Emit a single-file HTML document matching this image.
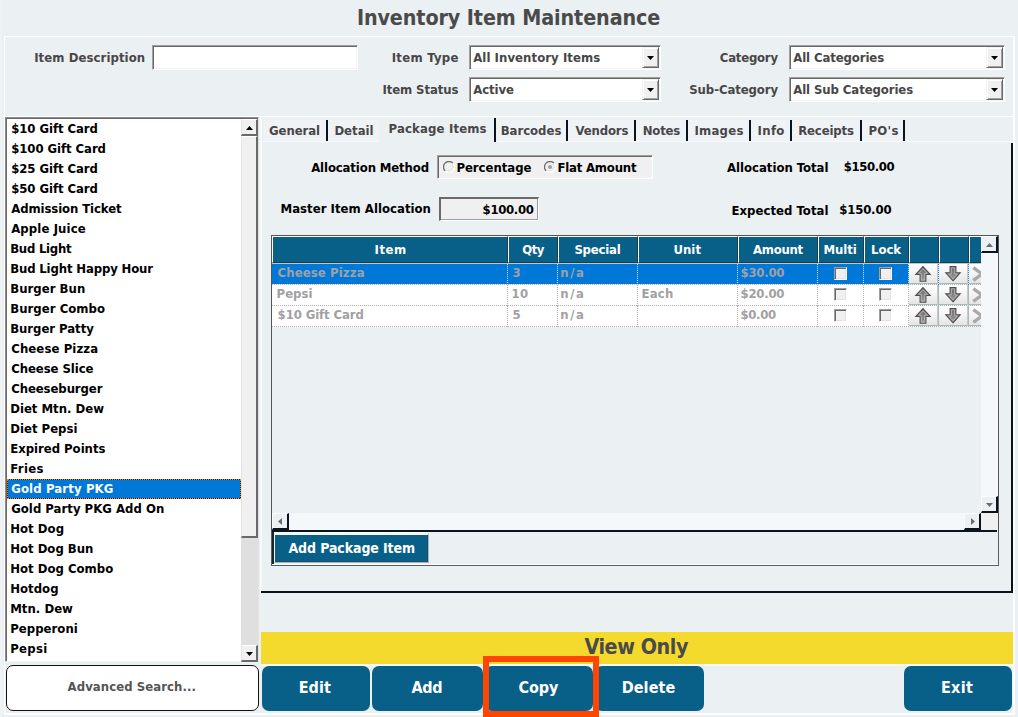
<!DOCTYPE html>
<html><head><meta charset="utf-8"><title>Inventory Item Maintenance</title>
<style>
html,body{margin:0;padding:0}
body{width:1018px;height:717px;overflow:hidden;position:relative;background:#ebf0f3;font-family:"DejaVu Sans Condensed","DejaVu Sans","Liberation Sans",sans-serif;font-weight:bold;font-size:13px;font-stretch:condensed;color:#000}
.a{position:absolute;box-sizing:border-box}
.t{position:absolute;white-space:nowrap}
.sunk{position:absolute;box-sizing:border-box;background:#fff;border:1px solid;border-color:#a0a0a0 #fff #fff #a0a0a0;box-shadow:inset 1px 1px 0 #696969,inset -1px -1px 0 #f4f4f4}
.cbtn{position:absolute;box-sizing:border-box;width:17px;height:21px;background:#f0f0f0;border:1px solid;border-color:#f4f4f4 #696969 #696969 #f4f4f4;box-shadow:inset 1px 1px 0 #fff,inset -1px -1px 0 #a0a0a0}
.sbtn{position:absolute;box-sizing:border-box;width:17px;height:17px;background:#f0f0f0;border-style:solid;border-width:1px 2px 2px 1px;border-color:#fff #696969 #696969 #e3e3e3}
.hc{position:absolute;box-sizing:border-box;top:236px;height:27px;background:#085f87;border-style:solid;border-width:1px;border-color:#fff #1d3d4d #1d3d4d #fff}
.cb{position:absolute;box-sizing:border-box;width:13px;height:13px;background:#f0f0f0;border:1px solid;border-color:#a0a0a0 #fff #fff #a0a0a0;box-shadow:inset 1px 1px 0 #696969,inset -1px -1px 0 #e3e3e3}
.ab{position:absolute;box-sizing:border-box;width:29px;height:20px;background:linear-gradient(#fff,#f4f4f4 50%,#e4e4e4);border-right:1px solid #c8c8c8;border-bottom:1px solid #a9b9b9;overflow:hidden}
.ab svg{position:absolute;left:0;top:0}
.gsb{position:absolute;box-sizing:border-box;width:17px;height:17px;background:#ecf0f3;border-style:solid;border-width:1px 2px 2px 1px;border-color:#fbfcfd #0a1420 #0a1420 #fbfcfd}
</style></head><body>
<div class="t" style="left:356.90px;top:4.00px;font-size:21.33px;line-height:27px;letter-spacing:-0.108px;color:#4a4a4a;">Inventory Item Maintenance</div>
<div class="a" style="left:0;top:0;width:2px;height:717px;background:#eff3f6"></div>
<div class="a" style="left:4px;top:36px;width:1011px;height:679px;border-style:solid;border-color:#fff;border-width:1px 2px 2px 1px"></div>
<div class="a" style="left:5px;top:116px;width:1008px;height:1px;background:#fff"></div>
<div class="t" style="left:34.20px;top:49.00px;font-size:13px;line-height:17px;letter-spacing:0.076px;color:#484648;">Item Description</div>
<div class="sunk" style="left:152px;top:45px;width:206px;height:25px"></div>
<div class="t" style="left:391.70px;top:49.00px;font-size:13px;line-height:17px;letter-spacing:0.280px;color:#484648;">Item Type</div>
<div class="t" style="left:382.40px;top:81.00px;font-size:13px;line-height:17px;letter-spacing:-0.086px;color:#484648;">Item Status</div>
<div class="sunk" style="left:469px;top:45px;width:192px;height:25px"></div>
<div class="t" style="left:473.20px;top:49.00px;font-size:13px;line-height:17px;letter-spacing:0.070px;color:#484648;">All Inventory Items</div>
<div class="cbtn" style="left:642px;top:47px"><svg class="a" style="left:4px;top:8px" width="7" height="4" viewBox="0 0 7 4"><path d="M0 0H7L3.5 4Z" fill="#000"/></svg></div>
<div class="sunk" style="left:469px;top:77px;width:192px;height:25px"></div>
<div class="t" style="left:473.20px;top:81.00px;font-size:13px;line-height:17px;letter-spacing:-0.081px;color:#484648;">Active</div>
<div class="cbtn" style="left:642px;top:79px"><svg class="a" style="left:4px;top:8px" width="7" height="4" viewBox="0 0 7 4"><path d="M0 0H7L3.5 4Z" fill="#000"/></svg></div>
<div class="sunk" style="left:789px;top:45px;width:216px;height:25px"></div>
<div class="t" style="left:793.20px;top:49.00px;font-size:13px;line-height:17px;letter-spacing:-0.096px;color:#484648;">All Categories</div>
<div class="cbtn" style="left:986px;top:47px"><svg class="a" style="left:4px;top:8px" width="7" height="4" viewBox="0 0 7 4"><path d="M0 0H7L3.5 4Z" fill="#000"/></svg></div>
<div class="sunk" style="left:789px;top:77px;width:216px;height:25px"></div>
<div class="t" style="left:793.20px;top:81.00px;font-size:13px;line-height:17px;letter-spacing:-0.085px;color:#484648;">All Sub Categories</div>
<div class="cbtn" style="left:986px;top:79px"><svg class="a" style="left:4px;top:8px" width="7" height="4" viewBox="0 0 7 4"><path d="M0 0H7L3.5 4Z" fill="#000"/></svg></div>
<div class="t" style="left:719.80px;top:49.00px;font-size:13px;line-height:17px;letter-spacing:-0.225px;color:#484648;">Category</div>
<div class="t" style="left:689.30px;top:81.00px;font-size:13px;line-height:17px;letter-spacing:-0.096px;color:#484648;">Sub-Category</div>
<div class="a" style="left:5px;top:117px;width:254px;height:545px;background:#fff;border:1px solid;border-color:#8c8c8c #e3e3e3 #f4f4f4 #8c8c8c;box-shadow:inset 1px 1px 0 #696969"></div>
<div class="t" style="left:11.20px;top:120.00px;font-size:13px;line-height:17px;letter-spacing:-0.056px;color:#000;">$10 Gift Card</div>
<div class="t" style="left:11.20px;top:140.00px;font-size:13px;line-height:17px;letter-spacing:-0.062px;color:#000;">$100 Gift Card</div>
<div class="t" style="left:11.20px;top:160.00px;font-size:13px;line-height:17px;letter-spacing:-0.056px;color:#000;">$25 Gift Card</div>
<div class="t" style="left:11.20px;top:180.00px;font-size:13px;line-height:17px;letter-spacing:-0.056px;color:#000;">$50 Gift Card</div>
<div class="t" style="left:11.20px;top:200.00px;font-size:13px;line-height:17px;letter-spacing:-0.097px;color:#000;">Admission Ticket</div>
<div class="t" style="left:11.20px;top:220.00px;font-size:13px;line-height:17px;letter-spacing:0.108px;color:#000;">Apple Juice</div>
<div class="t" style="left:10.20px;top:240.00px;font-size:13px;line-height:17px;letter-spacing:-0.242px;color:#000;">Bud Light</div>
<div class="t" style="left:10.20px;top:260.00px;font-size:13px;line-height:17px;letter-spacing:-0.140px;color:#000;">Bud Light Happy Hour</div>
<div class="t" style="left:10.20px;top:280.00px;font-size:13px;line-height:17px;letter-spacing:0.034px;color:#000;">Burger Bun</div>
<div class="t" style="left:10.20px;top:300.00px;font-size:13px;line-height:17px;letter-spacing:0.042px;color:#000;">Burger Combo</div>
<div class="t" style="left:10.20px;top:320.00px;font-size:13px;line-height:17px;letter-spacing:-0.041px;color:#000;">Burger Patty</div>
<div class="t" style="left:11.20px;top:340.00px;font-size:13px;line-height:17px;letter-spacing:0.106px;color:#000;">Cheese Pizza</div>
<div class="t" style="left:11.20px;top:360.00px;font-size:13px;line-height:17px;letter-spacing:-0.065px;color:#000;">Cheese Slice</div>
<div class="t" style="left:11.20px;top:380.00px;font-size:13px;line-height:17px;letter-spacing:-0.087px;color:#000;">Cheeseburger</div>
<div class="t" style="left:10.20px;top:400.00px;font-size:13px;line-height:17px;letter-spacing:-0.003px;color:#000;">Diet Mtn. Dew</div>
<div class="t" style="left:10.20px;top:420.00px;font-size:13px;line-height:17px;letter-spacing:0.016px;color:#000;">Diet Pepsi</div>
<div class="t" style="left:10.20px;top:440.00px;font-size:13px;line-height:17px;letter-spacing:-0.022px;color:#000;">Expired Points</div>
<div class="t" style="left:10.20px;top:460.00px;font-size:13px;line-height:17px;letter-spacing:0.382px;color:#000;">Fries</div>
<div class="a" style="left:7px;top:479px;width:234px;height:20px;background:#1c1c1c"><div class="a" style="left:0;top:0;width:234px;height:20px;background:#0078d7;background-clip:padding-box;border:1px dotted #ff8a2a"></div></div>
<div class="t" style="left:11.20px;top:480.00px;font-size:13px;line-height:17px;letter-spacing:0.132px;color:#fff;">Gold Party PKG</div>
<div class="t" style="left:11.20px;top:500.00px;font-size:13px;line-height:17px;letter-spacing:0.017px;color:#000;">Gold Party PKG Add On</div>
<div class="t" style="left:10.20px;top:520.00px;font-size:13px;line-height:17px;letter-spacing:0.044px;color:#000;">Hot Dog</div>
<div class="t" style="left:10.20px;top:540.00px;font-size:13px;line-height:17px;letter-spacing:-0.002px;color:#000;">Hot Dog Bun</div>
<div class="t" style="left:10.20px;top:560.00px;font-size:13px;line-height:17px;letter-spacing:0.012px;color:#000;">Hot Dog Combo</div>
<div class="t" style="left:10.20px;top:580.00px;font-size:13px;line-height:17px;letter-spacing:0.035px;color:#000;">Hotdog</div>
<div class="t" style="left:10.20px;top:600.00px;font-size:13px;line-height:17px;letter-spacing:0.026px;color:#000;">Mtn. Dew</div>
<div class="t" style="left:10.20px;top:620.00px;font-size:13px;line-height:17px;letter-spacing:0.035px;color:#000;">Pepperoni</div>
<div class="t" style="left:10.20px;top:640.00px;font-size:13px;line-height:17px;letter-spacing:0.290px;color:#000;">Pepsi</div>
<div class="a" style="left:241px;top:119px;width:17px;height:542px;background:#dfdfdf"></div>
<div class="sbtn" style="left:241px;top:119px"><svg class="a" style="left:4px;top:6px" width="7" height="4" viewBox="0 0 7 4"><path d="M0 4H7L3.5 0Z" fill="#000"/></svg></div>
<div class="sbtn" style="left:241px;top:136px;height:402px"></div>
<div class="sbtn" style="left:241px;top:645px"><svg class="a" style="left:4px;top:6px" width="7" height="4" viewBox="0 0 7 4"><path d="M0 0H7L3.5 4Z" fill="#000"/></svg></div>
<div class="a" style="left:260px;top:117px;width:2px;height:475px;background:#f7f9fb"></div>
<div class="a" style="left:264px;top:120px;width:115px;height:21px;background:#eff3f6"></div>
<div class="a" style="left:497px;top:120px;width:407px;height:21px;background:#eff3f6"></div>
<div class="a" style="left:263px;top:141px;width:116px;height:1px;background:#f7f9fa"></div>
<div class="a" style="left:496px;top:141px;width:516px;height:1px;background:#f7f9fa"></div>
<div class="a" style="left:326px;top:120px;width:2px;height:21px;background:#0a1420"></div>
<div class="a" style="left:494px;top:118px;width:2px;height:24px;background:#0a1420"></div>
<div class="a" style="left:566px;top:120px;width:2px;height:21px;background:#0a1420"></div>
<div class="a" style="left:634px;top:120px;width:2px;height:21px;background:#0a1420"></div>
<div class="a" style="left:686px;top:120px;width:2px;height:21px;background:#0a1420"></div>
<div class="a" style="left:749px;top:120px;width:2px;height:21px;background:#0a1420"></div>
<div class="a" style="left:790px;top:120px;width:2px;height:21px;background:#0a1420"></div>
<div class="a" style="left:860px;top:120px;width:2px;height:21px;background:#0a1420"></div>
<div class="a" style="left:903px;top:120px;width:2px;height:21px;background:#0a1420"></div>
<div class="t" style="left:269.00px;top:122.00px;font-size:13px;line-height:17px;letter-spacing:-0.076px;color:#484648;">General</div>
<div class="t" style="left:334.40px;top:122.00px;font-size:13px;line-height:17px;letter-spacing:0.013px;color:#484648;">Detail</div>
<div class="t" style="left:388.50px;top:120.00px;font-size:13px;line-height:17px;letter-spacing:0.163px;color:#484648;">Package Items</div>
<div class="t" style="left:500.70px;top:122.00px;font-size:13px;line-height:17px;letter-spacing:-0.021px;color:#484648;">Barcodes</div>
<div class="t" style="left:575.50px;top:122.00px;font-size:13px;line-height:17px;letter-spacing:-0.130px;color:#484648;">Vendors</div>
<div class="t" style="left:642.70px;top:122.00px;font-size:13px;line-height:17px;letter-spacing:-0.188px;color:#484648;">Notes</div>
<div class="t" style="left:694.40px;top:122.00px;font-size:13px;line-height:17px;letter-spacing:0.253px;color:#484648;">Images</div>
<div class="t" style="left:757.60px;top:122.00px;font-size:13px;line-height:17px;letter-spacing:0.313px;color:#484648;">Info</div>
<div class="t" style="left:798.20px;top:122.00px;font-size:13px;line-height:17px;letter-spacing:-0.140px;color:#484648;">Receipts</div>
<div class="t" style="left:868.40px;top:122.00px;font-size:13px;line-height:17px;letter-spacing:0.303px;color:#484648;">PO&#x27;s</div>
<div class="a" style="left:1011px;top:143px;width:2px;height:450px;background:#0a1420"></div>
<div class="a" style="left:261px;top:591px;width:752px;height:2px;background:#0a1420"></div>
<div class="t" style="left:311.20px;top:159.00px;font-size:13px;line-height:17px;letter-spacing:-0.124px;color:#000;">Allocation Method</div>
<div class="sunk" style="left:437px;top:155px;width:216px;height:24px;background:#f0f0f0"></div>
<svg class="a" style="left:443px;top:161px" width="12" height="12" viewBox="0 0 12 12"><circle cx="6" cy="6" r="5" fill="#f0f0f0"/><path d="M9.9 2.1A5.5 5.5 0 0 1 2.1 9.9" stroke="#fff" stroke-width="1.2" fill="none"/><path d="M9 3A4.3 4.3 0 0 1 3 9" stroke="#e6e6e6" stroke-width="1" fill="none"/><path d="M2.1 9.9A5.5 5.5 0 0 1 9.9 2.1" stroke="#6e6e6e" stroke-width="1.3" fill="none"/></svg>
<div class="t" style="left:456.40px;top:159.00px;font-size:13px;line-height:17px;letter-spacing:-0.014px;color:#000;">Percentage</div>
<svg class="a" style="left:544px;top:161px" width="12" height="12" viewBox="0 0 12 12"><circle cx="6" cy="6" r="5" fill="#f0f0f0"/><path d="M9.9 2.1A5.5 5.5 0 0 1 2.1 9.9" stroke="#fff" stroke-width="1.2" fill="none"/><path d="M9 3A4.3 4.3 0 0 1 3 9" stroke="#e6e6e6" stroke-width="1" fill="none"/><path d="M2.1 9.9A5.5 5.5 0 0 1 9.9 2.1" stroke="#6e6e6e" stroke-width="1.3" fill="none"/><circle cx="6" cy="6" r="2" fill="#a0a0a0"/></svg>
<div class="t" style="left:557.40px;top:159.00px;font-size:13px;line-height:17px;letter-spacing:-0.188px;color:#000;">Flat Amount</div>
<div class="t" style="left:727.00px;top:159.00px;font-size:13px;line-height:17px;letter-spacing:-0.015px;color:#000;">Allocation Total</div>
<div class="t" style="left:843.70px;top:158.00px;font-size:13px;line-height:17px;letter-spacing:-0.372px;color:#000;">$150.00</div>
<div class="t" style="left:280.50px;top:200.00px;font-size:13px;line-height:17px;letter-spacing:0.026px;color:#000;">Master Item Allocation</div>
<div class="a" style="left:439px;top:197px;width:100px;height:24px;background:#f0f0f0;border-style:solid;border-width:2px 1px 1px 2px;border-color:#696969 #fff #fff #696969;box-shadow:-1px -1px 0 #a0a0a0 inset"></div>
<div class="t" style="left:482.60px;top:201.00px;font-size:13px;line-height:17px;letter-spacing:-0.322px;color:#000;">$100.00</div>
<div class="t" style="left:731.50px;top:202.00px;font-size:13px;line-height:17px;letter-spacing:0.038px;color:#000;">Expected Total</div>
<div class="t" style="left:839.20px;top:201.00px;font-size:13px;line-height:17px;letter-spacing:-0.155px;color:#000;">$150.00</div>
<div class="a" style="left:271px;top:235px;width:728px;height:297px;border-style:solid;border-width:1px 1px 0 1px;border-color:#555"></div>
<div class="hc" style="left:272px;width:236px"></div>
<div class="t" style="left:374.50px;top:241.00px;font-size:13px;line-height:17px;letter-spacing:0.542px;color:#fff;">Item</div>
<div class="hc" style="left:508px;width:50px"></div>
<div class="t" style="left:522.20px;top:241.00px;font-size:13px;line-height:17px;letter-spacing:-0.466px;color:#fff;">Qty</div>
<div class="hc" style="left:558px;width:80px"></div>
<div class="t" style="left:574.40px;top:241.00px;font-size:13px;line-height:17px;letter-spacing:-0.193px;color:#fff;">Special</div>
<div class="hc" style="left:638px;width:100px"></div>
<div class="t" style="left:673.40px;top:241.00px;font-size:13px;line-height:17px;letter-spacing:0.057px;color:#fff;">Unit</div>
<div class="hc" style="left:738px;width:80px"></div>
<div class="t" style="left:753.10px;top:241.00px;font-size:13px;line-height:17px;letter-spacing:-0.326px;color:#fff;">Amount</div>
<div class="hc" style="left:818px;width:46px"></div>
<div class="t" style="left:823.40px;top:241.00px;font-size:13px;line-height:17px;letter-spacing:-0.042px;color:#fff;">Multi</div>
<div class="hc" style="left:864px;width:45px"></div>
<div class="t" style="left:871.00px;top:241.00px;font-size:13px;line-height:17px;letter-spacing:-0.040px;color:#fff;">Lock</div>
<div class="hc" style="left:909px;width:30px"></div>
<div class="hc" style="left:939px;width:30px"></div>
<div class="a" style="left:969px;top:236px;width:12px;height:27px;background:#085f87;border-style:solid;border-width:1px 0 1px 1px;border-color:#fff #1d3d4d #1d3d4d #fff"></div>
<div class="a" style="left:272px;top:263px;width:709px;height:1px;background:#b9c6cc"></div>
<div class="a" style="left:272px;top:264px;width:637px;height:21px;background:#fff"></div>
<div class="a" style="left:272px;top:264px;width:637px;height:20px;background:#0078d7"></div>
<div class="a" style="left:272px;top:284px;width:709px;height:0;border-top:1px dotted #b0b0b0"></div>
<div class="a" style="left:507px;top:264px;width:0;height:19px;border-left:1px dotted #cfe4f7"></div>
<div class="a" style="left:557px;top:264px;width:0;height:19px;border-left:1px dotted #cfe4f7"></div>
<div class="a" style="left:637px;top:264px;width:0;height:19px;border-left:1px dotted #cfe4f7"></div>
<div class="a" style="left:737px;top:264px;width:0;height:19px;border-left:1px dotted #cfe4f7"></div>
<div class="a" style="left:817px;top:264px;width:0;height:19px;border-left:1px dotted #cfe4f7"></div>
<div class="a" style="left:863px;top:264px;width:0;height:19px;border-left:1px dotted #cfe4f7"></div>
<div class="a" style="left:908px;top:264px;width:0;height:19px;border-left:1px dotted #cfe4f7"></div>
<div class="t" style="left:277.60px;top:264.00px;font-size:13px;line-height:17px;letter-spacing:0.106px;color:#a2a0a4;">Cheese Pizza</div>
<div class="t" style="left:512.60px;top:264.00px;font-size:13px;line-height:17px;letter-spacing:0.000px;color:#a2a0a4;">3</div>
<div class="t" style="left:560.30px;top:264.00px;font-size:13px;line-height:17px;letter-spacing:1.500px;color:#a2a0a4;">n/a</div>
<div class="t" style="left:740.50px;top:264.00px;font-size:13px;line-height:17px;letter-spacing:-0.239px;color:#a2a0a4;">$30.00</div>
<div class="cb" style="left:834px;top:267px"></div>
<div class="cb" style="left:879px;top:267px"></div>
<div class="ab" style="left:909px;top:264px"><svg width="29" height="20" viewBox="0 0 29 20"><path d="M14 2.6 L21.2 10.4 H16.9 V17.3 H11.1 V10.4 H6.8 Z" fill="url(#ag)" stroke="#4e4e4e" stroke-width="1.1"/><path d="M14 4.8 L18.4 9.3 H15.7 V16.1 H12.3 V9.3 H9.6 Z" fill="none" stroke="#b9b9b9" stroke-width="0.9"/></svg></div>
<div class="ab" style="left:939px;top:264px"><svg width="29" height="20" viewBox="0 0 29 20"><path d="M14 16.8 L21.2 8.8 H16.9 V2.6 H11.1 V8.8 H6.8 Z" fill="url(#ag)" stroke="#4e4e4e" stroke-width="1.1"/><path d="M14 14.6 L18.4 9.9 H15.7 V3.8 H12.3 V9.9 H9.6 Z" fill="none" stroke="#b9b9b9" stroke-width="0.9"/></svg></div>
<div class="ab" style="left:969px;top:264px;width:12px;border-right:none;overflow:hidden"><svg width="12" height="20" viewBox="0 0 12 20"><path d="M4.3 3.6 L13 10 L4.3 16.4" fill="none" stroke="#a9a9a9" stroke-width="3.4"/></svg></div>
<div class="a" style="left:938px;top:264px;width:0;height:21px;border-left:1px dotted #1f7fe0"></div>
<div class="a" style="left:968px;top:264px;width:0;height:21px;border-left:1px dotted #1f7fe0"></div>
<div class="a" style="left:272px;top:285px;width:637px;height:21px;background:#fff"></div>
<div class="a" style="left:272px;top:305px;width:709px;height:0;border-top:1px dotted #b0b0b0"></div>
<div class="a" style="left:507px;top:285px;width:0;height:21px;border-left:1px dotted #b0b0b0"></div>
<div class="a" style="left:557px;top:285px;width:0;height:21px;border-left:1px dotted #b0b0b0"></div>
<div class="a" style="left:637px;top:285px;width:0;height:21px;border-left:1px dotted #b0b0b0"></div>
<div class="a" style="left:737px;top:285px;width:0;height:21px;border-left:1px dotted #b0b0b0"></div>
<div class="a" style="left:817px;top:285px;width:0;height:21px;border-left:1px dotted #b0b0b0"></div>
<div class="a" style="left:863px;top:285px;width:0;height:21px;border-left:1px dotted #b0b0b0"></div>
<div class="a" style="left:908px;top:285px;width:0;height:21px;border-left:1px dotted #b0b0b0"></div>
<div class="t" style="left:276.60px;top:285.00px;font-size:13px;line-height:17px;letter-spacing:-0.010px;color:#a2a0a4;">Pepsi</div>
<div class="t" style="left:511.60px;top:285.00px;font-size:13px;line-height:17px;letter-spacing:0.262px;color:#a2a0a4;">10</div>
<div class="t" style="left:560.30px;top:285.00px;font-size:13px;line-height:17px;letter-spacing:1.500px;color:#a2a0a4;">n/a</div>
<div class="t" style="left:641.50px;top:285.00px;font-size:13px;line-height:17px;letter-spacing:0.229px;color:#a2a0a4;">Each</div>
<div class="t" style="left:740.50px;top:285.00px;font-size:13px;line-height:17px;letter-spacing:-0.239px;color:#a2a0a4;">$20.00</div>
<div class="cb" style="left:834px;top:288px"></div>
<div class="cb" style="left:879px;top:288px"></div>
<div class="ab" style="left:909px;top:285px"><svg width="29" height="20" viewBox="0 0 29 20"><path d="M14 2.6 L21.2 10.4 H16.9 V17.3 H11.1 V10.4 H6.8 Z" fill="url(#ag)" stroke="#4e4e4e" stroke-width="1.1"/><path d="M14 4.8 L18.4 9.3 H15.7 V16.1 H12.3 V9.3 H9.6 Z" fill="none" stroke="#b9b9b9" stroke-width="0.9"/></svg></div>
<div class="ab" style="left:939px;top:285px"><svg width="29" height="20" viewBox="0 0 29 20"><path d="M14 16.8 L21.2 8.8 H16.9 V2.6 H11.1 V8.8 H6.8 Z" fill="url(#ag)" stroke="#4e4e4e" stroke-width="1.1"/><path d="M14 14.6 L18.4 9.9 H15.7 V3.8 H12.3 V9.9 H9.6 Z" fill="none" stroke="#b9b9b9" stroke-width="0.9"/></svg></div>
<div class="ab" style="left:969px;top:285px;width:12px;border-right:none;overflow:hidden"><svg width="12" height="20" viewBox="0 0 12 20"><path d="M4.3 3.6 L13 10 L4.3 16.4" fill="none" stroke="#a9a9a9" stroke-width="3.4"/></svg></div>
<div class="a" style="left:938px;top:285px;width:1px;height:21px;background:#a3bdbd"></div>
<div class="a" style="left:968px;top:285px;width:1px;height:21px;background:#a3bdbd"></div>
<div class="a" style="left:272px;top:306px;width:637px;height:21px;background:#fff"></div>
<div class="a" style="left:272px;top:326px;width:709px;height:0;border-top:1px dotted #b0b0b0"></div>
<div class="a" style="left:507px;top:306px;width:0;height:21px;border-left:1px dotted #b0b0b0"></div>
<div class="a" style="left:557px;top:306px;width:0;height:21px;border-left:1px dotted #b0b0b0"></div>
<div class="a" style="left:637px;top:306px;width:0;height:21px;border-left:1px dotted #b0b0b0"></div>
<div class="a" style="left:737px;top:306px;width:0;height:21px;border-left:1px dotted #b0b0b0"></div>
<div class="a" style="left:817px;top:306px;width:0;height:21px;border-left:1px dotted #b0b0b0"></div>
<div class="a" style="left:863px;top:306px;width:0;height:21px;border-left:1px dotted #b0b0b0"></div>
<div class="a" style="left:908px;top:306px;width:0;height:21px;border-left:1px dotted #b0b0b0"></div>
<div class="t" style="left:277.60px;top:306.00px;font-size:13px;line-height:17px;letter-spacing:-0.098px;color:#a2a0a4;">$10 Gift Card</div>
<div class="t" style="left:512.60px;top:306.00px;font-size:13px;line-height:17px;letter-spacing:0.000px;color:#a2a0a4;">5</div>
<div class="t" style="left:560.30px;top:306.00px;font-size:13px;line-height:17px;letter-spacing:1.500px;color:#a2a0a4;">n/a</div>
<div class="t" style="left:740.50px;top:306.00px;font-size:13px;line-height:17px;letter-spacing:-0.339px;color:#a2a0a4;">$0.00</div>
<div class="cb" style="left:834px;top:309px"></div>
<div class="cb" style="left:879px;top:309px"></div>
<div class="ab" style="left:909px;top:306px"><svg width="29" height="20" viewBox="0 0 29 20"><path d="M14 2.6 L21.2 10.4 H16.9 V17.3 H11.1 V10.4 H6.8 Z" fill="url(#ag)" stroke="#4e4e4e" stroke-width="1.1"/><path d="M14 4.8 L18.4 9.3 H15.7 V16.1 H12.3 V9.3 H9.6 Z" fill="none" stroke="#b9b9b9" stroke-width="0.9"/></svg></div>
<div class="ab" style="left:939px;top:306px"><svg width="29" height="20" viewBox="0 0 29 20"><path d="M14 16.8 L21.2 8.8 H16.9 V2.6 H11.1 V8.8 H6.8 Z" fill="url(#ag)" stroke="#4e4e4e" stroke-width="1.1"/><path d="M14 14.6 L18.4 9.9 H15.7 V3.8 H12.3 V9.9 H9.6 Z" fill="none" stroke="#b9b9b9" stroke-width="0.9"/></svg></div>
<div class="ab" style="left:969px;top:306px;width:12px;border-right:none;overflow:hidden"><svg width="12" height="20" viewBox="0 0 12 20"><path d="M4.3 3.6 L13 10 L4.3 16.4" fill="none" stroke="#a9a9a9" stroke-width="3.4"/></svg></div>
<div class="a" style="left:938px;top:306px;width:1px;height:21px;background:#a3bdbd"></div>
<div class="a" style="left:968px;top:306px;width:1px;height:21px;background:#a3bdbd"></div>
<svg width="0" height="0" style="position:absolute"><defs><linearGradient id="ag" x1="0" y1="0" x2="0" y2="1"><stop offset="0" stop-color="#6c6c6c"/><stop offset="1" stop-color="#9a9a9a"/></linearGradient></defs></svg>
<div class="a" style="left:981px;top:236px;width:17px;height:277px;background:#f5f8fa"></div>
<div class="gsb" style="left:981px;top:236px"><svg class="a" style="left:4px;top:6px" width="7" height="4" viewBox="0 0 7 4"><path d="M0 4H7L3.5 0Z" fill="#6b6b6b"/></svg></div>
<div class="gsb" style="left:981px;top:496px"><svg class="a" style="left:4px;top:6px" width="7" height="4" viewBox="0 0 7 4"><path d="M0 0H7L3.5 4Z" fill="#6b6b6b"/></svg></div>
<div class="a" style="left:272px;top:513px;width:709px;height:17px;background:#f5f8fa"></div>
<div class="gsb" style="left:272px;top:513px"><svg class="a" style="left:5px;top:4px" width="4" height="7" viewBox="0 0 4 7"><path d="M4 0V7L0 3.5Z" fill="#6b6b6b"/></svg></div>
<div class="gsb" style="left:964px;top:513px"><svg class="a" style="left:6px;top:4px" width="4" height="7" viewBox="0 0 4 7"><path d="M0 0V7L4 3.5Z" fill="#6b6b6b"/></svg></div>
<div class="a" style="left:981px;top:513px;width:17px;height:17px;background:#f0f0f0"></div>
<div class="a" style="left:272px;top:530px;width:725px;height:2px;background:#0a1420"></div>
<div class="a" style="left:271px;top:532px;width:728px;height:34px;border-style:solid;border-width:0 1px 1px 1px;border-color:#5e5e5e;box-shadow:0 -1px 0 #fff inset"></div>
<div class="a" style="left:272px;top:532px;width:2px;height:32px;background:#18242e"></div>
<div class="a" style="left:274px;top:532px;width:155px;height:31px;background:#085f87;border-style:solid;border-width:3px 1px 1px 1px;border-color:#f4f7f8 #a3b5ba #a3b5ba #f4f7f8;box-shadow:inset -1px -1px 0 #1f4d63"></div>
<div class="t" style="left:288.40px;top:539.00px;font-size:14px;line-height:18px;letter-spacing:-0.096px;color:#fff;">Add Package Item</div>
<div class="a" style="left:261px;top:632px;width:752px;height:32px;background:#f3da2c"></div>
<div class="a" style="left:261px;top:664px;width:752px;height:2px;background:#f7f9fa"></div>
<div class="t" style="left:584.40px;top:633.00px;font-size:21.33px;line-height:27px;letter-spacing:-0.426px;color:#4a4a4a;">View Only</div>
<div class="a" style="left:6px;top:665px;width:253px;height:46px;background:#fff;border:1px solid #111;border-radius:7px"></div>
<div class="t" style="left:67.60px;top:678.00px;font-size:13px;line-height:17px;letter-spacing:0.068px;color:#555;">Advanced Search...</div>
<div class="a" style="left:262px;top:666px;width:108px;height:45px;background:#085f87;border-radius:7px"></div>
<div class="t" style="left:298.70px;top:677.00px;font-size:16px;line-height:21px;letter-spacing:0.043px;color:#fff;">Edit</div>
<div class="a" style="left:372px;top:666px;width:111px;height:45px;background:#085f87;border-radius:7px"></div>
<div class="t" style="left:411.40px;top:677.00px;font-size:16px;line-height:21px;letter-spacing:-0.273px;color:#fff;">Add</div>
<div class="a" style="left:485px;top:666px;width:108px;height:45px;background:#085f87;border-radius:7px"></div>
<div class="t" style="left:518.60px;top:677.00px;font-size:16px;line-height:21px;letter-spacing:-0.119px;color:#fff;">Copy</div>
<div class="a" style="left:595px;top:666px;width:109px;height:45px;background:#085f87;border-radius:7px"></div>
<div class="t" style="left:621.70px;top:677.00px;font-size:16px;line-height:21px;letter-spacing:0.101px;color:#fff;">Delete</div>
<div class="a" style="left:904px;top:666px;width:108px;height:45px;background:#085f87;border-radius:7px"></div>
<div class="t" style="left:941.00px;top:677.00px;font-size:16px;line-height:21px;letter-spacing:0.284px;color:#fff;">Exit</div>
<div class="a" style="left:483px;top:656px;width:116px;height:61px;border:6px solid #ff4500"></div>
</body></html>
